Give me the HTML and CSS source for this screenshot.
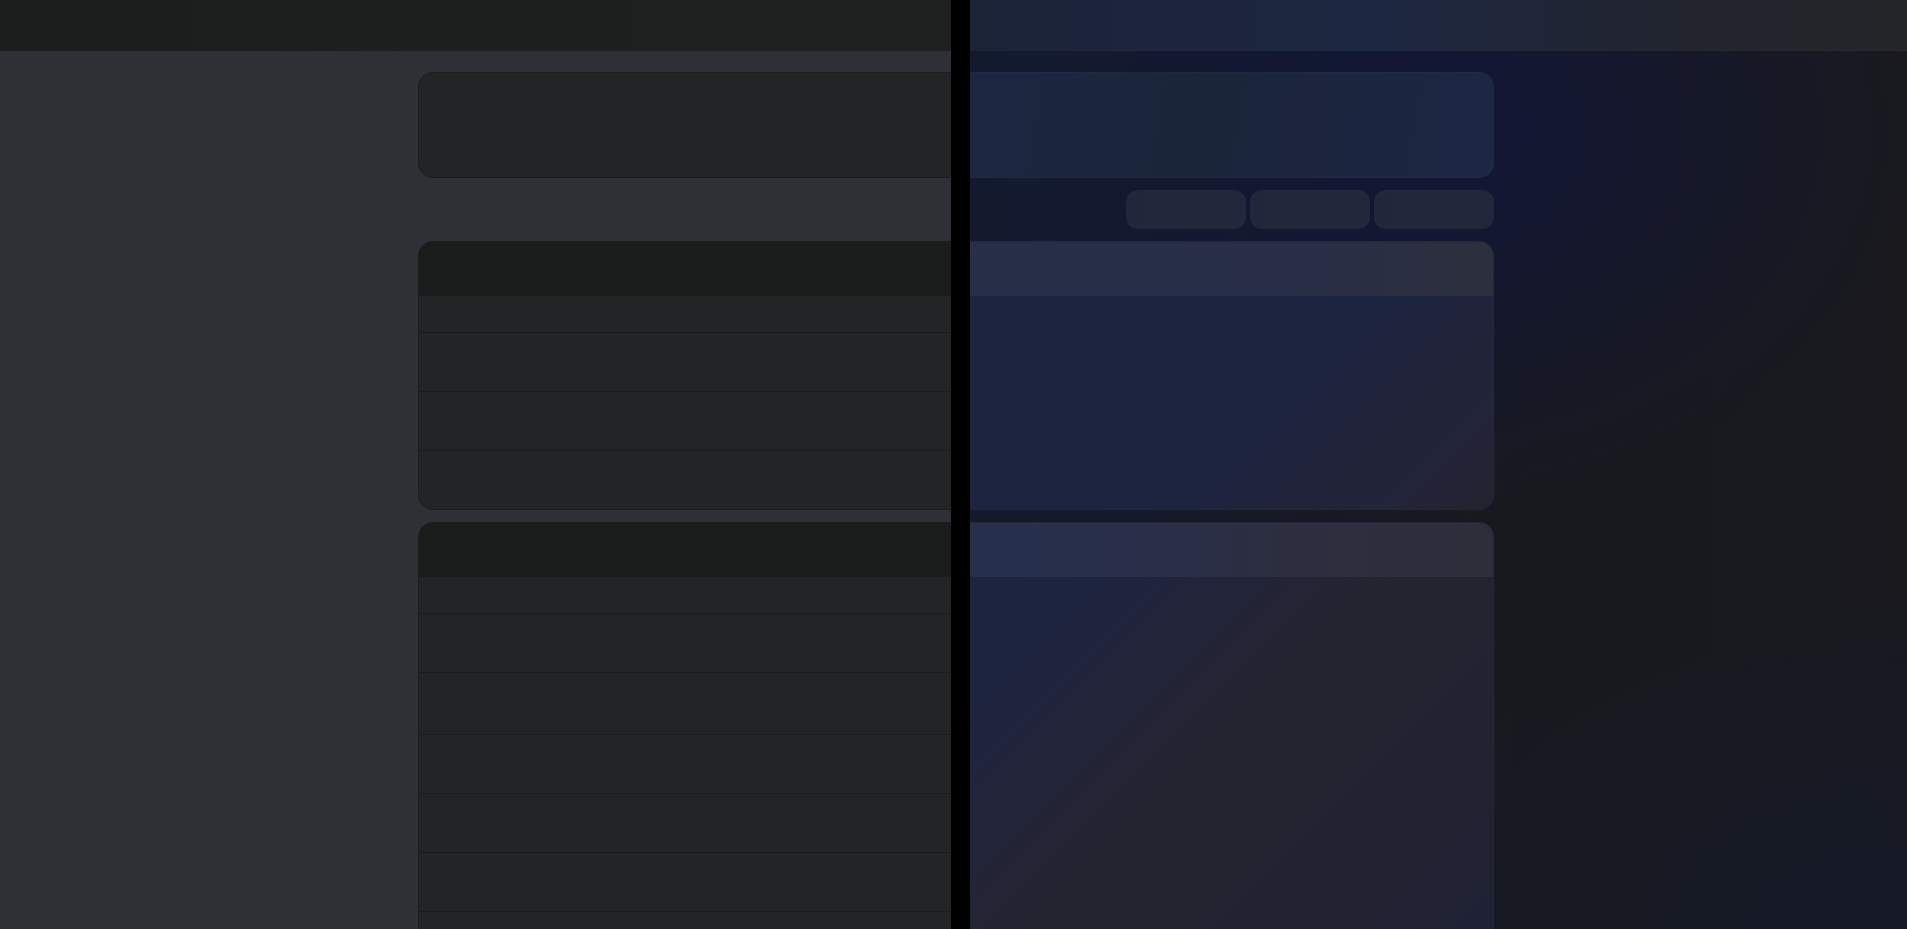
FILE: index.html
```html
<!DOCTYPE html>
<html lang="en">
<head>
  <meta charset="UTF-8">
  <title>Theme compare</title>
  <link rel="stylesheet" href="styles.css">
</head>
<body>
  <div class="compare">

    <!-- grey theme (left of the handle) -->
    <div class="pane grey">
      <div class="topbar"></div>
      <div class="content">
        <div class="card summary"></div>
        <div class="toolbar">
          <div class="tool"></div>
          <div class="tool"></div>
          <div class="tool"></div>
        </div>
        <div class="card table">
          <div class="card-head"></div>
          <div class="row thead"></div>
          <div class="row"></div>
          <div class="row"></div>
          <div class="row last"></div>
        </div>
        <div class="card table">
          <div class="card-head"></div>
          <div class="row thead"></div>
          <div class="row"></div>
          <div class="row tall"></div>
          <div class="row"></div>
          <div class="row"></div>
          <div class="row"></div>
          <div class="row"></div>
        </div>
      </div>
    </div>

    <!-- blue theme (right of the handle) -->
    <div class="pane blue">
      <div class="topbar"></div>
      <div class="content">
        <div class="card summary"></div>
        <div class="toolbar">
          <div class="tool"></div>
          <div class="tool"></div>
          <div class="tool"></div>
        </div>
        <div class="card table">
          <div class="card-head"></div>
          <div class="row thead"></div>
          <div class="row"></div>
          <div class="row"></div>
          <div class="row last"></div>
        </div>
        <div class="card table">
          <div class="card-head"></div>
          <div class="row thead"></div>
          <div class="row"></div>
          <div class="row tall"></div>
          <div class="row"></div>
          <div class="row"></div>
          <div class="row"></div>
          <div class="row"></div>
        </div>
      </div>
    </div>

    <div class="handle"></div>
  </div>
</body>
</html>
```

FILE: styles.css
```css
body {
  margin: 0;
  font-family: "Liberation Sans", Arial, sans-serif;
  background: #2f3036;
  overflow: hidden;
}

.compare {
  position: relative;
  height: 100vh;
  overflow: hidden;
}

.pane {
  height: 100vh;
  padding-left: 5px;
  box-sizing: border-box;
}

.topbar {
  height: 51px;
  margin-left: -5px;
}

.content {
  width: 1076px;
  margin: 21px auto 0;
}

.card {
  border: 1px solid transparent;
  border-radius: 15px;
  overflow: hidden;
}

.summary {
  height: 104px;
}

.toolbar {
  display: flex;
  justify-content: flex-end;
  gap: 4px;
  margin: 12px 0;
}

.tool {
  width: 120px;
  height: 39px;
  border-radius: 12px;
}

.table + .table {
  margin-top: 12px;
}

.card-head {
  height: 54px;
}

.row {
  height: 58px;
  border-bottom: 1px solid transparent;
}

.row.thead {
  height: 36px;
}

.row.tall {
  height: 61px;
}

.row.last {
  border-bottom: none;
}

/* grey theme */
.grey {
  background: #2f3036;
}

.grey .topbar {
  background: linear-gradient(90deg, #1c1d1d, #222323);
}

.grey .card {
  background: #232426;
  border-color: #1b1c1e;
}

.grey .card-head {
  background: #1a1b1b;
}

.grey .row {
  border-bottom-color: #1a1b1d;
}

.grey .row.last {
  border-bottom: none;
}

.grey .tool {
  background: #26272b;
}

/* blue theme */
.blue {
  position: absolute;
  top: 0;
  left: 0;
  width: 100%;
  clip-path: inset(0 0 0 970px);
  background:
    radial-gradient(500px 380px at 1420px 130px, rgba(17, 22, 58, 0.9), rgba(17, 22, 58, 0) 100%),
    radial-gradient(520px 360px at 1880px 940px, rgba(22, 27, 42, 0.9), rgba(22, 27, 42, 0) 100%),
    linear-gradient(90deg, #141a2c 0%, #141a2c 55%, #18191f 80%, #19191e 100%);
}

.blue .topbar {
  background: linear-gradient(90deg, #1b2337 50%, #1d2741 72%, #22252f 88%, #242529 100%);
}

.blue .card {
  border-color: rgba(255, 255, 255, 0.02);
}

.blue .summary {
  background: linear-gradient(100deg, #1c2641 0%, #1c2640 55%, #1b2539 72%, #1d2644 100%);
}

.blue .tool {
  background: linear-gradient(90deg, #21273a, #23273d);
}

.blue .table {
  background: linear-gradient(135deg, #1c2440 0%, #1c2440 76%, #21233a 84%, #22243a 92%, #23232f 100%);
}

.blue .card-head {
  background: linear-gradient(90deg, #272e48 0%, #282e48 80%, #2c2f3c 100%);
}

.blue .table + .table {
  background: linear-gradient(135deg, #1c2440 0%, #1c2440 46%, #22243a 56%, #242430 68%, #222331 82%, #1f2234 96%);
}

.blue .table + .table .card-head {
  background: linear-gradient(90deg, #26304e 0%, #26304d 55%, #2a2e48 70%, #2c2e40 80%, #2e2e3a 100%);
}

.blue .row {
  border-bottom-color: transparent;
}

.handle {
  position: absolute;
  top: 0;
  bottom: 0;
  left: 951px;
  width: 19px;
  background: #000;
}
```
